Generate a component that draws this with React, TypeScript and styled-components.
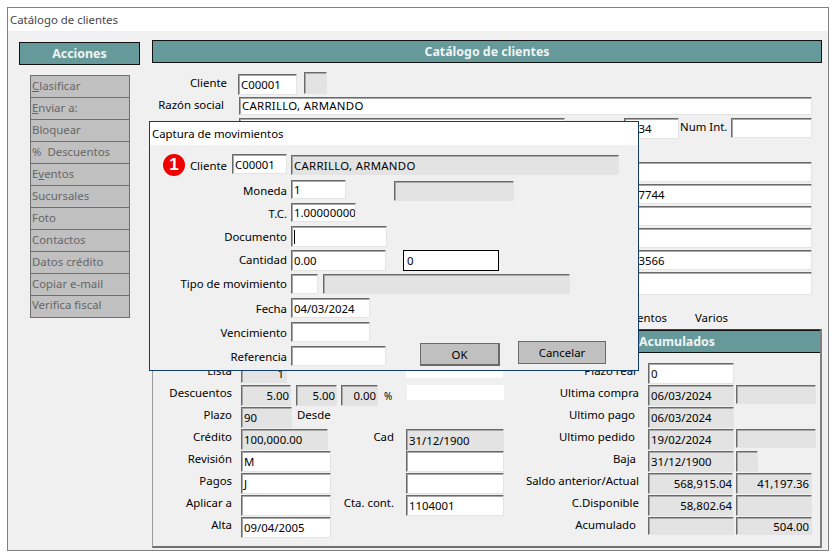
import React from "react";
import styled, { createGlobalStyle } from "styled-components";

const GlobalStyle = createGlobalStyle`
  html, body {
    margin: 0;
    padding: 0;
    background: #fff;
    overflow: hidden;
  }
  * {
    box-sizing: border-box;
  }
  body {
    font-family: "Noto Sans", "Open Sans", sans-serif;
    font-size: 11.4px;
    color: #000;
  }
`;

const Window = styled.div`
  position: relative;
  display: flex;
  flex-direction: column;
  width: 822px;
  height: 544px;
  margin: 7px 0 0 7px;
  border: 1px solid #808080;
`;

const TitleBar = styled.div`
  height: 23px;
  flex-shrink: 0;
  padding-left: 2px;
  line-height: 24px;
  background: #fff;
  color: #444;
`;

const Content = styled.div`
  flex: 1;
  display: flex;
  padding: 9px 6px 2px 0;
  background: #f0f0f0;
`;

const Sidebar = styled.div`
  width: 144px;
  flex-shrink: 0;
  padding: 2px 12px 0 11px;
`;

const SectionHeader = styled.div`
  height: 23px;
  border: 1px solid #111;
  background: #669999;
  color: #eef4f4;
  font-weight: 700;
  font-size: 12.4px;
  line-height: 21px;
  text-align: center;
`;

const Menu = styled.div`
  width: 100px;
  margin: 10px 0 0 11px;
  border: 1px solid #6e6e6e;
  border-bottom: 0;
`;

const MenuItem = styled.div`
  height: 22px;
  padding-left: 1px;
  border-bottom: 1px solid #6e6e6e;
  background: #c0c0c0;
  color: #666;
  line-height: 19px;

  &:last-child {
    line-height: 17px;
  }
`;

const Main = styled.div`
  width: 670px;
  flex-shrink: 0;
  display: flex;
  flex-direction: column;
`;

const Row = styled.div<{ $h: number; $mt?: number }>`
  display: flex;
  align-items: flex-start;
  flex-shrink: 0;
  height: ${(p) => p.$h}px;
  margin-top: ${(p) => p.$mt ?? 0}px;
`;

const Label = styled.div<{ $w?: number; $ml?: number; $mt?: number }>`
  flex-shrink: 0;
  width: ${(p) => (p.$w ? `${p.$w}px` : "auto")};
  margin-left: ${(p) => p.$ml ?? 0}px;
  margin-top: ${(p) => p.$mt ?? 0}px;
  line-height: 17px;
  text-align: right;
  white-space: nowrap;
`;

const PanelLabel = styled(Label)`
  margin-top: -1px;
`;

const Field = styled.div<{
  $w: number;
  $h?: number;
  $ml?: number;
  $mt?: number;
  $gray?: boolean;
  $right?: boolean;
  $pl?: number;
  $pr?: number;
  $pb?: number;
}>`
  display: flex;
  align-items: center;
  justify-content: ${(p) => (p.$right ? "flex-end" : "flex-start")};
  flex-shrink: 0;
  width: ${(p) => p.$w}px;
  height: ${(p) => p.$h ?? 21}px;
  margin-left: ${(p) => p.$ml ?? 0}px;
  margin-top: ${(p) => p.$mt ?? 0}px;
  padding: 0 ${(p) => p.$pr ?? 2}px ${(p) => p.$pb ?? 0}px ${(p) => p.$pl ?? 2}px;
  border: 1px solid;
  border-color: #6a6a6a #e4e4e4 #e4e4e4 #6a6a6a;
  box-shadow: inset 1px 1px 0 #a8a8a8;
  background: ${(p) => (p.$gray ? "#e3e3e3" : "#fff")};
  white-space: nowrap;
  overflow: hidden;
`;

const CustomerName = styled.span`
  letter-spacing: 0.3px;
`;

const ActiveField = styled.div`
  display: flex;
  align-items: center;
  width: 96px;
  height: 21px;
  margin-left: 17px;
  padding-left: 3px;
  border: 1px solid #000;
  background: #fff;
`;

const Caret = styled.span`
  width: 1px;
  height: 14px;
  background: #000;
`;

const FlatBox = styled.div<{ $h: number; $mt?: number; $ml: number }>`
  flex-shrink: 0;
  width: 97px;
  height: ${(p) => p.$h}px;
  margin-top: ${(p) => p.$mt ?? 0}px;
  margin-left: ${(p) => p.$ml}px;
  background: #fff;
`;

const Tabs = styled.div`
  display: flex;
  justify-content: flex-end;
  align-items: flex-end;
  gap: 28px;
  flex-shrink: 0;
  height: 31px;
  padding-right: 94px;
  line-height: 16px;
`;

const Panel = styled.div`
  display: flex;
  flex-direction: column;
  flex: 1;
  margin-top: 3px;
  border: 1px solid #9a9a9a;
  border-top-color: #444;
  border-right: 2px solid #808080;
  border-bottom: 2px solid #707070;
`;

const PanelHeader = styled.div`
  height: 23px;
  flex-shrink: 0;
  padding-left: 486px;
  border-top: 1px solid #111;
  border-bottom: 1px solid #111;
  background: #669999;
  color: #eef4f4;
  font-weight: 700;
  font-size: 12.4px;
  line-height: 21px;
`;

const PanelBody = styled.div`
  display: flex;
  padding-top: 10px;
`;

const Column = styled.div<{ $w: number }>`
  display: flex;
  flex-direction: column;
  width: ${(p) => p.$w}px;
  flex-shrink: 0;
`;

const Dialog = styled.div`
  position: absolute;
  left: 141px;
  top: 113px;
  display: flex;
  flex-direction: column;
  width: 490px;
  height: 250px;
  border: 1px solid #0f3f68;
  background: #f0f0f0;
`;

const DialogTitle = styled.div`
  height: 23px;
  flex-shrink: 0;
  padding-left: 2px;
  background: #fff;
  line-height: 24px;
`;

const DialogBody = styled.div`
  display: flex;
  flex-direction: column;
  padding-top: 9px;
`;

const Badge = styled.div`
  display: flex;
  align-items: center;
  justify-content: center;
  flex-shrink: 0;
  width: 22px;
  height: 22px;
  margin-left: 13px;
  border-radius: 50%;
  background: #ee0000;
  color: #fff;
  font-family: "Liberation Sans", sans-serif;
  font-weight: 700;
  font-size: 17px;
`;

const Button = styled.div<{ $w: number; $h: number; $ml: number; $mt: number; $default?: boolean }>`
  display: flex;
  align-items: center;
  justify-content: center;
  flex-shrink: 0;
  width: ${(p) => p.$w}px;
  height: ${(p) => p.$h}px;
  margin-left: ${(p) => p.$ml}px;
  margin-top: ${(p) => p.$mt}px;
  border: 1px solid #6a6a6a;
  border-width: ${(p) => (p.$default ? "1px 2px 2px 1px" : "1px")};
  background: #c0c0c0;
`;

const Percent = styled.span`
  flex-shrink: 0;
  margin: 4px 0 0 6px;
  font-size: 10px;
  line-height: 14px;
`;

const menuItems = [
  <><u>C</u>lasificar</>,
  <><u>E</u>nviar a:</>,
  <>Bloquear</>,
  <>%&nbsp; Descuentos</>,
  <>E<u>v</u>entos</>,
  <>Sucursales</>,
  <>Foto</>,
  <>Contactos</>,
  <>Datos crédito</>,
  <>Copiar e-mail</>,
  <>Verifica fiscal</>,
];

export default function App() {
  return (
    <>
      <GlobalStyle />
      <Window>
        <TitleBar>Catálogo de clientes</TitleBar>
        <Content>
          <Sidebar>
            <SectionHeader>Acciones</SectionHeader>
            <Menu>
              {menuItems.map((item, i) => (
                <MenuItem key={i}>{item}</MenuItem>
              ))}
            </Menu>
          </Sidebar>
          <Main>
            <SectionHeader>Catálogo de clientes</SectionHeader>
            <Row $h={25} $mt={9}>
              <Label $w={75} $mt={2}>Cliente</Label>
              <Field $w={59} $ml={11} $mt={2}>C00001</Field>
              <Field $w={23} $h={22} $ml={7} $gray />
            </Row>
            <Row $h={21}>
              <Label $w={72} $mt={-1}>Razón social</Label>
              <Field $w={573} $h={18} $ml={15} $pb={2}><CustomerName>CARRILLO, ARMANDO</CustomerName></Field>
            </Row>
            <Row $h={44}>
              <Field $w={326} $ml={87} />
              <Field $w={55} $ml={59} $pl={7}>234</Field>
              <Label $w={47} $ml={1}>Num Int.</Label>
              <Field $w={81} $h={20} $ml={4} />
            </Row>
            <Row $h={22}><Field $w={573} $h={20} $ml={87} /></Row>
            <Row $h={22}><Field $w={573} $h={20} $ml={87} $pl={392}>37744</Field></Row>
            <Row $h={22}><Field $w={573} $h={20} $ml={87} /></Row>
            <Row $h={22}><Field $w={573} $h={20} $ml={87} /></Row>
            <Row $h={22}><Field $w={573} $h={20} $ml={87} $pl={392}>43566</Field></Row>
            <Row $h={23}><Field $w={573} $h={23} $ml={87} /></Row>
            <Tabs>
              <span>Movimientos</span>
              <span>Varios</span>
            </Tabs>
            <Panel>
              <PanelHeader>Acumulados</PanelHeader>
              <PanelBody>
                <Column $w={352}>
                  <Row $h={22}>
                    <PanelLabel $w={79}>Lista</PanelLabel>
                    <Field $w={46} $h={20} $ml={9} $gray $right>1</Field>
                    <FlatBox $h={15} $ml={119} />
                  </Row>
                  <Row $h={22}>
                    <PanelLabel $w={79}>Descuentos</PanelLabel>
                    <Field $w={50} $ml={9} $gray $right $pr={1}>5.00</Field>
                    <Field $w={41} $ml={5} $gray $right $pr={1}>5.00</Field>
                    <Field $w={37} $ml={4} $gray $right $pr={1}>0.00</Field>
                    <Percent>%</Percent>
                    <FlatBox $h={15} $ml={15} />
                  </Row>
                  <Row $h={22}>
                    <PanelLabel $w={79}>Plazo</PanelLabel>
                    <Field $w={51} $ml={9} $gray>90</Field>
                    <PanelLabel $ml={5}>Desde</PanelLabel>
                  </Row>
                  <Row $h={22}>
                    <PanelLabel $w={79}>Crédito</PanelLabel>
                    <Field $w={87} $ml={9} $gray>100,000.00</Field>
                    <PanelLabel $w={66}>Cad</PanelLabel>
                    <Field $w={98} $h={22} $ml={12} $gray>31/12/1900</Field>
                  </Row>
                  <Row $h={22}>
                    <PanelLabel $w={79}>Revisión</PanelLabel>
                    <Field $w={90} $ml={9}>M</Field>
                    <Field $w={98} $ml={75} />
                  </Row>
                  <Row $h={22}>
                    <PanelLabel $w={79}>Pagos</PanelLabel>
                    <Field $w={90} $ml={9}>J</Field>
                    <Field $w={98} $ml={75} />
                  </Row>
                  <Row $h={22}>
                    <PanelLabel $w={79}>Aplicar a</PanelLabel>
                    <Field $w={90} $ml={9} />
                    <PanelLabel $w={63}>Cta. cont.</PanelLabel>
                    <Field $w={98} $ml={12}>1104001</Field>
                  </Row>
                  <Row $h={22}>
                    <PanelLabel $w={79}>Alta</PanelLabel>
                    <Field $w={90} $ml={9}>09/04/2005</Field>
                  </Row>
                </Column>
                <Column $w={316}>
                  <Row $h={22}>
                    <PanelLabel $w={131}>Plazo real</PanelLabel>
                    <Field $w={86} $ml={12}>0</Field>
                  </Row>
                  <Row $h={22}>
                    <PanelLabel $w={134}>Ultima compra</PanelLabel>
                    <Field $w={86} $ml={9} $gray>06/03/2024</Field>
                    <Field $w={80} $h={19} $ml={2} $gray />
                  </Row>
                  <Row $h={22}>
                    <PanelLabel $w={130}>Ultimo pago</PanelLabel>
                    <Field $w={86} $ml={13} $gray>06/03/2024</Field>
                  </Row>
                  <Row $h={22}>
                    <PanelLabel $w={130}>Ultimo pedido</PanelLabel>
                    <Field $w={86} $ml={13} $gray>19/02/2024</Field>
                    <Field $w={80} $h={19} $ml={2} $gray />
                  </Row>
                  <Row $h={22}>
                    <PanelLabel $w={131}>Baja</PanelLabel>
                    <Field $w={86} $ml={12} $gray>31/12/1900</Field>
                    <Field $w={22} $ml={2} $gray />
                  </Row>
                  <Row $h={22}>
                    <PanelLabel $w={134}>Saldo anterior/Actual</PanelLabel>
                    <Field $w={85} $ml={9} $gray $right $pr={0}>568,915.04</Field>
                    <Field $w={76} $ml={3} $gray $right>41,197.36</Field>
                  </Row>
                  <Row $h={22}>
                    <PanelLabel $w={134}>C.Disponible</PanelLabel>
                    <Field $w={85} $ml={9} $gray $right $pr={0}>58,802.64</Field>
                    <Field $w={76} $ml={3} $gray />
                  </Row>
                  <Row $h={22}>
                    <PanelLabel $w={131}>Acumulado</PanelLabel>
                    <Field $w={86} $h={18} $ml={12} $gray />
                    <Field $w={76} $h={18} $ml={2} $gray $right>504.00</Field>
                  </Row>
                </Column>
              </PanelBody>
            </Panel>
          </Main>
        </Content>
        <Dialog>
          <DialogTitle>Captura de movimientos</DialogTitle>
          <DialogBody>
            <Row $h={26}>
              <Badge>1</Badge>
              <Label $w={42} $mt={3}>Cliente</Label>
              <Field $w={55} $h={20} $ml={5}>C00001</Field>
              <Field $w={328} $h={20} $ml={4} $mt={1} $gray><CustomerName>CARRILLO, ARMANDO</CustomerName></Field>
            </Row>
            <Row $h={23}>
              <Label $w={137} $mt={2}>Moneda</Label>
              <Field $w={55} $h={19} $ml={4}>1</Field>
              <Field $w={120} $h={20} $ml={48} $mt={1} $gray />
            </Row>
            <Row $h={23}>
              <Label $w={137} $mt={2}>T.C.</Label>
              <Field $w={65} $h={19} $ml={4}>1.00000000</Field>
            </Row>
            <Row $h={24}>
              <Label $w={137} $mt={2}>Documento</Label>
              <Field $w={96} $ml={4}><Caret /></Field>
            </Row>
            <Row $h={24}>
              <Label $w={137} $mt={1}>Cantidad</Label>
              <Field $w={95} $ml={4}>0.00</Field>
              <ActiveField>0</ActiveField>
            </Row>
            <Row $h={24}>
              <Label $w={137} $mt={1}>Tipo de movimiento</Label>
              <Field $w={27} $h={20} $ml={4} />
              <Field $w={247} $h={20} $ml={5} $gray />
            </Row>
            <Row $h={24}>
              <Label $w={137} $mt={2}>Fecha</Label>
              <Field $w={79} $h={20} $ml={4}>04/03/2024</Field>
            </Row>
            <Row $h={19}>
              <Label $w={137} $mt={2}>Vencimiento</Label>
              <Field $w={79} $h={20} $ml={4} />
            </Row>
            <Row $h={25}>
              <Label $w={137} $mt={7}>Referencia</Label>
              <Field $w={95} $h={20} $ml={4} $mt={5} />
              <Button $w={80} $h={23} $ml={34} $mt={2} $default>OK</Button>
              <Button $w={88} $h={23} $ml={18} $mt={0}>Cancelar</Button>
            </Row>
          </DialogBody>
        </Dialog>
      </Window>
    </>
  );
}
